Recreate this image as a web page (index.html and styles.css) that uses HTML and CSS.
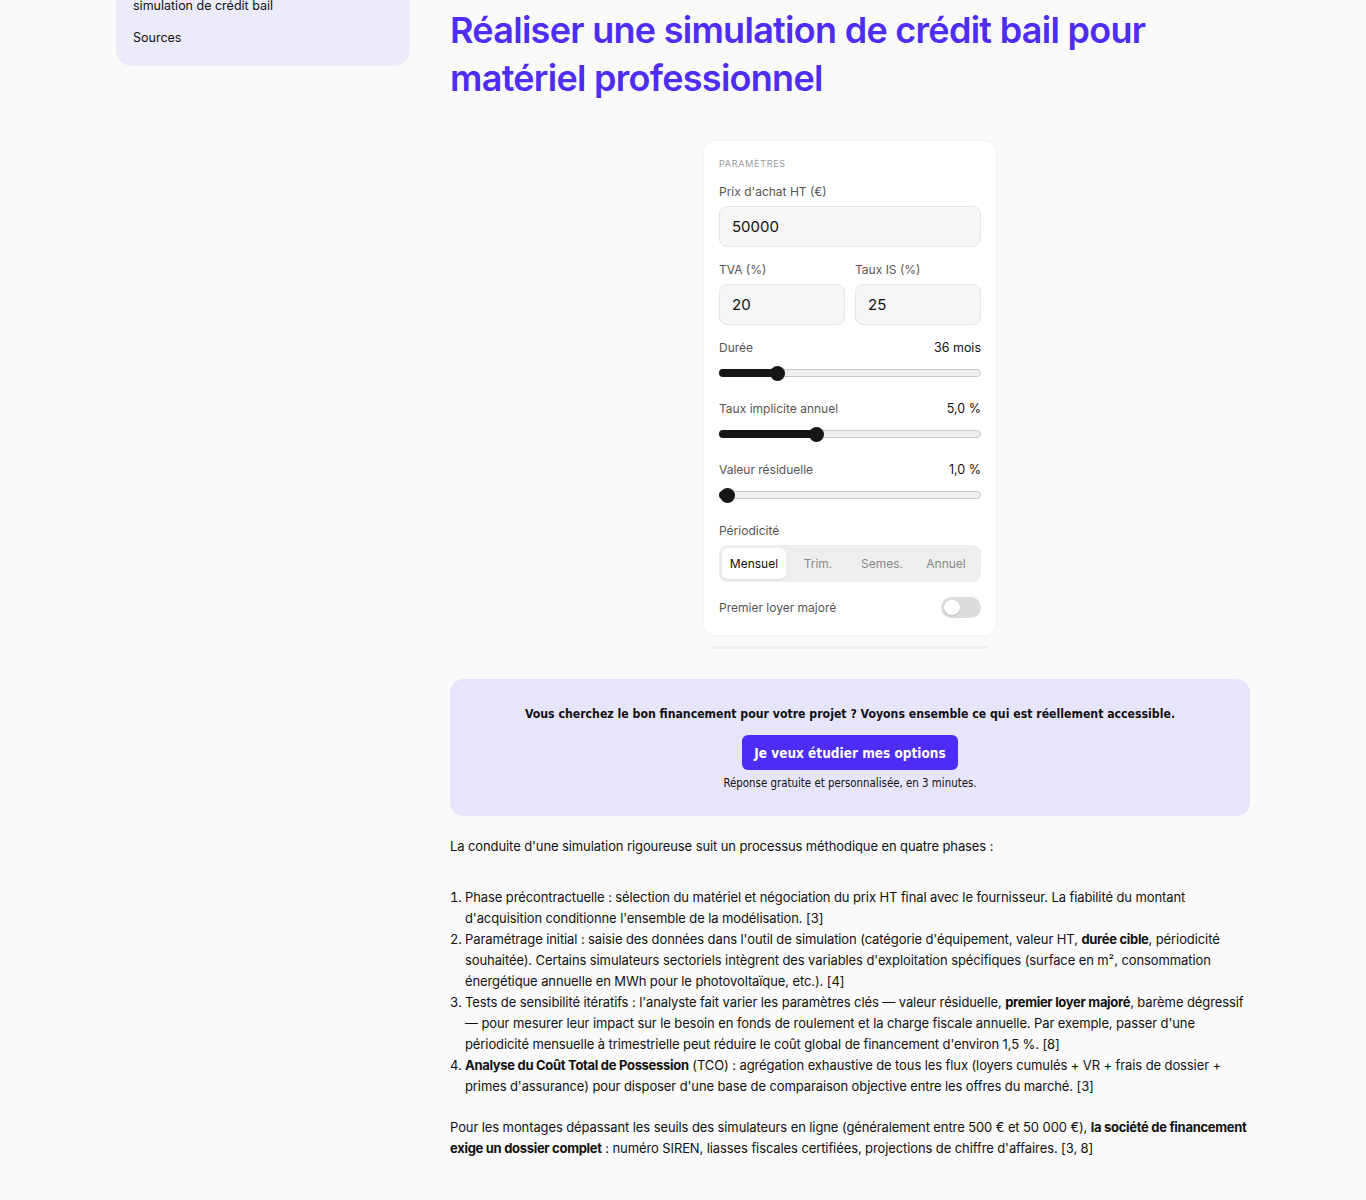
FILE: index.html
```html
<!DOCTYPE html>
<html lang="fr">
<head>
<meta charset="utf-8">
<title>Simulation crédit bail</title>
<link rel="stylesheet" href="styles.css">
</head>
<body>
<div class="page">
  <aside class="sidebar">
    <nav class="toc">
      <a class="toc-item">Réaliser une<br>simulation de crédit bail</a>
      <a class="toc-item">Sources</a>
    </nav>
  </aside>
  <main class="content">
    <h1 class="title">Réaliser une simulation de crédit bail pour matériel professionnel</h1>

    <div class="sim-wrap">
      <section class="card">
        <div class="card-kicker">PARAMÈTRES</div>
        <div class="field">
          <label class="label">Prix d'achat HT (€)</label>
          <div class="input">50000</div>
        </div>
        <div class="field-row">
          <div class="field">
            <label class="label">TVA (%)</label>
            <div class="input">20</div>
          </div>
          <div class="field">
            <label class="label">Taux IS (%)</label>
            <div class="input">25</div>
          </div>
        </div>
        <div class="slider-field">
          <div class="slider-head"><span class="label">Durée</span><span class="value">36 mois</span></div>
          <div class="slider"><div class="fill" style="width:22%"></div><div class="knob" style="left:22%"></div></div>
        </div>
        <div class="slider-field">
          <div class="slider-head"><span class="label">Taux implicite annuel</span><span class="value">5,0 %</span></div>
          <div class="slider"><div class="fill" style="width:37%"></div><div class="knob" style="left:37%"></div></div>
        </div>
        <div class="slider-field">
          <div class="slider-head"><span class="label">Valeur résiduelle</span><span class="value">1,0 %</span></div>
          <div class="slider"><div class="fill" style="width:3%"></div><div class="knob" style="left:3%"></div></div>
        </div>
        <div class="field period">
          <label class="label">Périodicité</label>
          <div class="segmented">
            <span class="seg active">Mensuel</span>
            <span class="seg">Trim.</span>
            <span class="seg">Semes.</span>
            <span class="seg">Annuel</span>
          </div>
        </div>
        <div class="toggle-row">
          <span class="label">Premier loyer majoré</span>
          <span class="toggle"><span class="toggle-knob"></span></span>
        </div>
      </section>
      <div class="card-edge"></div>
    </div>

    <section class="cta">
      <p class="cta-text">Vous cherchez le bon financement pour votre projet ? Voyons ensemble ce qui est réellement accessible.</p>
      <a class="cta-btn">Je veux étudier mes options</a>
      <p class="cta-sub">Réponse gratuite et personnalisée, en 3 minutes.</p>
    </section>

    <div class="prose">
      <p>La conduite d'une simulation rigoureuse suit un processus méthodique en quatre phases :</p>
      <ol>
        <li>Phase précontractuelle : sélection du matériel et négociation du prix HT final avec le fournisseur. La fiabilité du montant d'acquisition conditionne l'ensemble de la modélisation. [3]</li>
        <li>Paramétrage initial : saisie des données dans l'outil de simulation (catégorie d'équipement, valeur HT, <strong>durée cible</strong>, périodicité souhaitée). Certains simulateurs sectoriels intègrent des variables d'exploitation spécifiques (surface en m², consommation énergétique annuelle en MWh pour le photovoltaïque, etc.). [4]</li>
        <li>Tests de sensibilité itératifs : l'analyste fait varier les paramètres clés — valeur résiduelle, <strong>premier loyer majoré</strong>, barème dégressif — pour mesurer leur impact sur le besoin en fonds de roulement et la charge fiscale annuelle. Par exemple, passer d'une périodicité mensuelle à trimestrielle peut réduire le coût global de financement d'environ 1,5 %. [8]</li>
        <li><strong>Analyse du Coût Total de Possession</strong> (TCO) : agrégation exhaustive de tous les flux (loyers cumulés + VR + frais de dossier + primes d'assurance) pour disposer d'une base de comparaison objective entre les offres du marché. [3]</li>
      </ol>
      <p>Pour les montages dépassant les seuils des simulateurs en ligne (généralement entre 500 € et 50 000 €), <strong>la société de financement exige un dossier complet</strong> : numéro SIREN, liasses fiscales certifiées, projections de chiffre d'affaires. [3, 8]</p>
    </div>
  </main>
</div>
</body>
</html>
```

FILE: styles.css
```css
* { box-sizing: border-box; }
html, body { margin: 0; padding: 0; background: #fafafa; }
body {
  font-family: "Inter", "Noto Sans", sans-serif;
  color: #111;
  font-size: 13px;
}
.page {
  display: flex;
  align-items: flex-start;
  gap: 40px;
  padding-left: 116px;
  margin-top: -24px;
}
.sidebar {
  width: 294px;
  flex: none;
  background: #ecebfa;
  border-radius: 0 0 16px 16px;
  padding: 0 17px 18px;
}
.toc { display: flex; flex-direction: column; gap: 12px; }
.toc-item {
  font-size: 12.5px;
  line-height: 20px;
  color: #111;
  text-decoration: none;
}
.content {
  width: 800px;
  flex: none;
  padding-top: 24px;
}
.title {
  margin: 6px 0 0;
  font-size: 36px;
  line-height: 48px;
  font-weight: 600;
  color: #4f2cf2;
  letter-spacing: -0.02em;
  width: 800px;
}

/* simulator card */
.sim-wrap {
  display: flex;
  flex-direction: column;
  align-items: center;
  margin-top: 39px;
}
.card {
  width: 292px;
  background: #fff;
  border-radius: 12px;
  padding: 17px 15px 17px;
  box-shadow: 0 0 0 1px #f3f3f3;
}
.card-kicker {
  font-size: 9px;
  letter-spacing: 0.08em;
  color: #9a9a9a;
  line-height: 12px;
}
.label {
  display: block;
  font-size: 12px;
  color: #555;
  line-height: 16px;
}
.field { margin-top: 14px; }
.field .label { margin-bottom: 6px; }
.input {
  height: 41px;
  border: 1px solid #e6e6e6;
  background: #f6f6f6;
  border-radius: 8px;
  padding: 0 12px;
  display: flex;
  align-items: center;
  font-size: 15px;
  color: #111;
}
.field-row {
  display: grid;
  grid-template-columns: 1fr 1fr;
  gap: 10px;
  margin-top: 8px;
}
.field-row .field { margin-top: 7px; }
.slider-field { margin-top: 24px; }
.field-row + .slider-field { margin-top: 15px; }
.slider-head {
  display: flex;
  justify-content: space-between;
  align-items: center;
}
.value { font-size: 12.5px; color: #111; line-height: 16px; }
.slider {
  position: relative;
  margin-top: 13px;
  height: 8px;
  border: 1px solid #c9c9c9;
  background: #efefef;
  border-radius: 4px;
}
.slider .fill {
  position: absolute;
  left: -1px; top: -1px; bottom: -1px;
  background: #161616;
  border-radius: 4px;
}
.slider .knob {
  position: absolute;
  top: 50%;
  width: 15px; height: 15px;
  margin: -7.5px 0 0 -7.5px;
  border-radius: 50%;
  background: #161616;
}
.period { margin-top: 24px; }
.segmented {
  display: grid;
  grid-template-columns: repeat(4, 1fr);
  background: #eeeeee;
  border-radius: 8px;
  padding: 3px;
  height: 37px;
}
.seg {
  display: flex;
  align-items: center;
  justify-content: center;
  font-size: 12px;
  color: #8a8a8a;
  border-radius: 6px;
}
.seg.active {
  background: #fff;
  color: #111;
  box-shadow: 0 1px 2px rgba(0,0,0,0.08);
}
.toggle-row {
  display: flex;
  justify-content: space-between;
  align-items: center;
  margin-top: 15px;
}
.toggle {
  width: 40px; height: 21px;
  border-radius: 11px;
  background: #dcdcdc;
  padding: 3px;
  display: flex;
}
.toggle-knob {
  width: 16px; height: 15px;
  border-radius: 50%;
  background: #fff;
  box-shadow: 0 1px 2px rgba(0,0,0,0.15);
}
.card-edge {
  width: 276px;
  height: 3px;
  margin-top: 11px;
  background: #f0f0f0;
  border-radius: 2px;
}

/* CTA */
.cta {
  margin-top: 30px;
  background: #e6e5fc;
  border-radius: 14px;
  padding: 26px 20px 26px;
  display: flex;
  flex-direction: column;
  align-items: center;
  font-family: "Liberation Sans Narrow", "DejaVu Sans Condensed", "Liberation Sans", sans-serif;
}
.cta-text {
  margin: 0;
  font-size: 12.2px;
  font-weight: 700;
  line-height: 18px;
  color: #111;
}
.cta-btn {
  margin-top: 12px;
  background: #4f2cf5;
  color: #fff;
  border-radius: 6px;
  height: 35px;
  padding: 0 12px;
  display: flex;
  align-items: center;
  font-size: 13.5px;
  font-weight: 700;
}
.cta-sub {
  margin: 6px 0 0;
  font-size: 11.4px;
  line-height: 14px;
  color: #111;
}

/* prose */
.prose { padding-bottom: 40px; letter-spacing: -0.1px; }
.prose p {
  margin: 20px 0 0;
  line-height: 21px;
}
.prose ol {
  margin: 30px 0 0;
  padding-left: 15px;
  line-height: 21px;
}
.prose li { padding-left: 0; }
.prose ol + p { margin-top: 20px; }
.prose strong { font-weight: 700; letter-spacing: -0.3px; }
```
